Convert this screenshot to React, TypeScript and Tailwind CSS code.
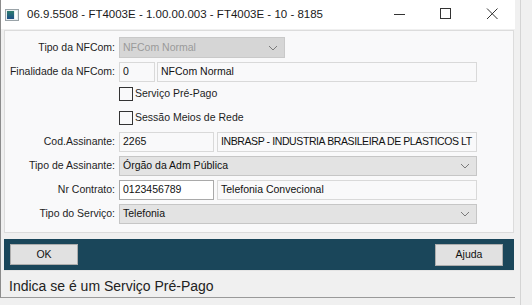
import React from "react";

const font = { fontFamily: '"Liberation Sans", Arial, sans-serif' };

function Chevron() {
  return (
    <svg width="10" height="6" viewBox="0 0 10 6" fill="none">
      <path d="M1 1l4 4 4-4" stroke="#7a7a7a" strokeWidth="1" />
    </svg>
  );
}

function Label({ text }: { text: string }) {
  return (
    <div className="w-[111px] shrink-0 pr-[1px] text-right text-[10.5px] text-[#1e1e1e]">{text}</div>
  );
}

function Field({ value, width, white, tight }: { value: string; width: string; white?: boolean; tight?: boolean }) {
  return (
    <div
      className={`${width} h-full shrink-0 overflow-hidden whitespace-nowrap border px-[3px] flex items-center text-[10.5px] text-[#111] ${
        white ? "bg-white border-[#a9a9a9]" : "bg-[#f9f9fa] border-[#d9d9d9]"
      } ${tight ? "tracking-[-0.4px]" : ""}`}
    >
      {value}
    </div>
  );
}

function Select({ value, width, disabled }: { value: string; width: string; disabled?: boolean }) {
  return (
    <div
      className={`${width} h-full shrink-0 border flex items-center justify-between pl-[3px] pr-[6px] text-[10.5px] ${
        disabled ? "bg-[#d6d6d6] border-[#c9c9c9] text-[#9a9a9a]" : "bg-[#e3e3e3] border-[#c6c6c6] text-[#111]"
      }`}
    >
      <span>{value}</span>
      <Chevron />
    </div>
  );
}

function Check({ text }: { text: string }) {
  return (
    <div className="flex items-center">
      <div className="w-[14px] h-[14px] border border-[#333] bg-[#f9f9fa]" />
      <span className="ml-[2px] text-[10.5px] text-[#1e1e1e]">{text}</span>
    </div>
  );
}

export default function App() {
  return (
    <div className="w-[532px] h-[305px] bg-[#f0f0f0] flex overflow-hidden" style={font}>
      <div className="w-[515px] h-[298px] flex flex-col border-l border-[#8c8c8c] border-b border-b-[#9a9a9a] bg-[#f0f0f0]">
        {/* Title bar */}
        <div className="h-[29px] bg-white flex items-center shrink-0">
          <div className="ml-[4px] w-[14px] h-[12px] border border-[#9aa3a8] bg-[#e9eef0] flex p-[1px]">
            <div className="w-[8px] h-full bg-gradient-to-b from-[#2f7d6d] to-[#1f4e86]" />
            <div className="ml-[1px] w-[2px] h-full bg-white" />
          </div>
          <div className="ml-[8px] text-[11.5px] text-[#1a1a1a]">
            06.9.5508 - FT4003E - 1.00.00.003 - FT4003E - 10 - 8185
          </div>
          <div className="ml-auto flex items-center">
            <svg width="46" height="29" viewBox="0 0 46 29">
              <path d="M17 14.5h11" stroke="#333" strokeWidth="1" />
            </svg>
            <svg width="46" height="29" viewBox="0 0 46 29">
              <rect x="17.5" y="8.5" width="10" height="10" fill="none" stroke="#333" strokeWidth="1" />
            </svg>
            <svg width="46" height="29" viewBox="0 0 46 29">
              <path d="M18 8.5l10.5 10.5M28.5 8.5L18 19" stroke="#333" strokeWidth="1" />
            </svg>
          </div>
        </div>

        {/* Form panel */}
        <div className="ml-[3px] mt-[1px] w-[510px] border border-[#dcdcdc] bg-[#f9f9fa] pt-[6px] pb-[8px] flex flex-col">
          <div className="h-[21px] flex items-center">
            <Label text="Tipo da NFCom:" />
            <div className="ml-[3px] h-full flex">
              <Select value="NFCom Normal" width="w-[166px]" disabled />
            </div>
          </div>
          <div className="mt-[4px] h-[20px] flex items-center">
            <Label text="Finalidade da NFCom:" />
            <div className="ml-[3px] h-full flex gap-[2px]">
              <Field value="0" width="w-[36px]" />
              <Field value="NFCom Normal" width="w-[320px]" />
            </div>
          </div>
          <div className="h-[24px] flex items-center pl-[114px]">
            <Check text="Serviço Pré-Pago" />
          </div>
          <div className="h-[24px] flex items-center pl-[114px]">
            <Check text="Sessão Meios de Rede" />
          </div>
          <div className="mt-[2px] h-[20px] flex items-center">
            <Label text="Cod.Assinante:" />
            <div className="ml-[3px] h-full flex gap-[3px]">
              <Field value="2265" width="w-[95px]" />
              <Field value="INBRASP - INDUSTRIA BRASILEIRA DE PLASTICOS LT" width="w-[260px]" tight />
            </div>
          </div>
          <div className="mt-[4px] h-[20px] flex items-center">
            <Label text="Tipo de Assinante:" />
            <div className="ml-[3px] h-full flex">
              <Select value="Órgão da Adm Pública" width="w-[358px]" />
            </div>
          </div>
          <div className="mt-[4px] h-[20px] flex items-center">
            <Label text="Nr Contrato:" />
            <div className="ml-[3px] h-full flex gap-[3px]">
              <Field value="0123456789" width="w-[95px]" white />
              <Field value="Telefonia Convecional" width="w-[260px]" />
            </div>
          </div>
          <div className="mt-[4px] h-[20px] flex items-center">
            <Label text="Tipo do Serviço:" />
            <div className="ml-[3px] h-full flex">
              <Select value="Telefonia" width="w-[358px]" />
            </div>
          </div>
        </div>

        {/* Button bar */}
        <div className="ml-[3px] mt-[6px] w-[510px] h-[31px] bg-[#1a465a] flex items-center justify-between px-[6px]">
          <button className="w-[68px] h-[21px] bg-[#e1e1e1] border border-[#adadad] text-[10.5px] text-[#111]">
            OK
          </button>
          <button className="w-[68px] h-[22px] bg-[#e1e1e1] border border-[#adadad] text-[10.5px] text-[#111] mr-[5px]">
            Ajuda
          </button>
        </div>

        {/* Status bar */}
        <div className="ml-[3px] w-[510px] flex-1 border-t border-[#e4e4e4] flex items-center pl-[5px] pt-[4px] text-[14px] text-[#222]">
          Indica se é um Serviço Pré-Pago
        </div>
      </div>
      <div className="ml-[5px] w-px h-full bg-[#d4d4d4]" />
    </div>
  );
}
